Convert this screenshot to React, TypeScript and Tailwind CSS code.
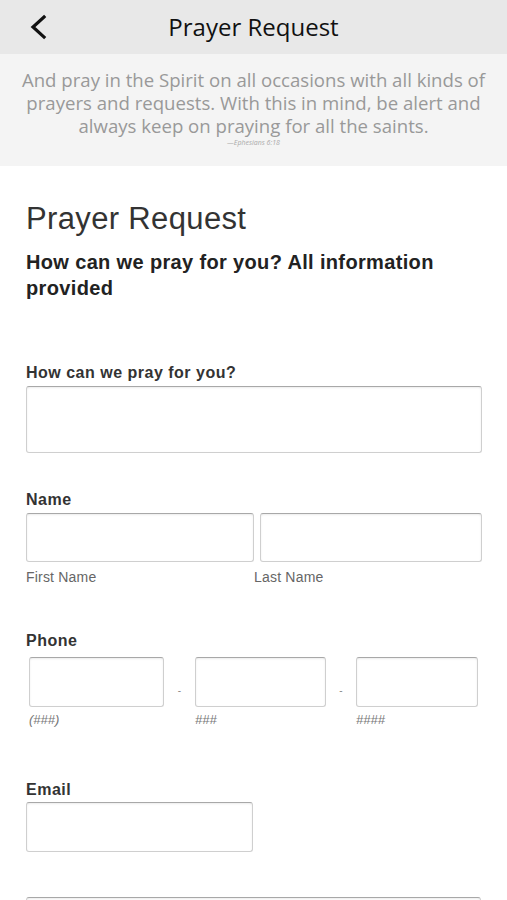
const inputCls =
  "block bg-white border border-[#cfcfcf] border-t-[#a8a8a8] rounded-[3px] shadow-[inset_0_1px_2px_rgba(0,0,0,0.08)]";

const Label = ({ children }: { children: React.ReactNode }) => (
  <div className="text-[16px] leading-[18px] font-bold tracking-[0.5px] text-[#333]">{children}</div>
);

export default function App() {
  return (
    <div className="w-[507px] h-[900px] overflow-hidden bg-white font-['Liberation_Sans',Arial,sans-serif]">
      {/* top bar */}
      <div className="relative h-[54px] bg-[#e8e8e8] flex items-center justify-center">
        <svg
          className="absolute left-[28px] top-[13px]"
          width="20"
          height="28"
          viewBox="0 0 20 28"
          fill="none"
          stroke="#111"
          strokeWidth="3.2"
          strokeLinecap="square"
        >
          <path d="M16 4 L5 14 L16 24" />
        </svg>
        <h1 className="font-['Open_Sans',sans-serif] text-[24px] text-[#111]">Prayer Request</h1>
      </div>

      {/* verse banner */}
      <div className="h-[112px] bg-[#f4f4f4] pt-[14px] text-center font-['Open_Sans',sans-serif] text-[#999]">
        <p className="text-[18.6px] leading-[23px] font-normal">
          And pray in the Spirit on all occasions with all kinds of
          <br />
          prayers and requests. With this in mind, be alert and
          <br />
          always keep on praying for all the saints.
        </p>
        <p className="text-[7px] italic leading-[12px] text-[#aaa]">—Ephesians 6:18</p>
      </div>

      {/* form */}
      <div className="pl-[26px] pr-[25px]">
        <h2 className="mt-[35px] text-[31px] leading-[36px] tracking-[0.35px] text-[#333]">Prayer Request</h2>
        <p className="mt-[12px] text-[20px] leading-[26px] font-bold tracking-[0.35px] text-[#222]">
          How can we pray for you? All information
          <br />
          provided
        </p>

        <div className="mt-[63px]">
          <Label>How can we pray for you?</Label>
          <div className={`${inputCls} mt-[4px] h-[67px] w-[456px]`} />
        </div>

        <div className="mt-[38px]">
          <Label>Name</Label>
          <div className="mt-[4px] flex gap-[6px]">
            <div className={`${inputCls} h-[49px] w-[228px]`} />
            <div className={`${inputCls} h-[49px] w-[222px]`} />
          </div>
          <div className="mt-[7px] flex text-[14px] leading-[16px] tracking-[0.2px] text-[#666]">
            <span className="w-[228px]">First Name</span>
            <span>Last Name</span>
          </div>
        </div>

        <div className="mt-[47px]">
          <Label>Phone</Label>
          <div className="mt-[7px] ml-[3px] flex items-center">
            <div className={`${inputCls} h-[50px] w-[135px]`} />
            <span className="w-[31px] pt-[16px] text-center text-[10px] text-[#888]">-</span>
            <div className={`${inputCls} h-[50px] w-[131px]`} />
            <span className="w-[30px] pt-[16px] text-center text-[10px] text-[#888]">-</span>
            <div className={`${inputCls} h-[50px] w-[122px]`} />
          </div>
          <div className="mt-[5px] ml-[3px] flex text-[13px] leading-[16px] italic text-[#777]">
            <span className="w-[166px]">(###)</span>
            <span className="w-[161px]">###</span>
            <span>####</span>
          </div>
        </div>

        <div className="mt-[53px]">
          <Label>Email</Label>
          <div className={`${inputCls} mt-[3px] h-[50px] w-[227px]`} />
        </div>

        <div className={`${inputCls} mt-[45px] h-[50px] w-[455px]`} />
      </div>
    </div>
  );
}
